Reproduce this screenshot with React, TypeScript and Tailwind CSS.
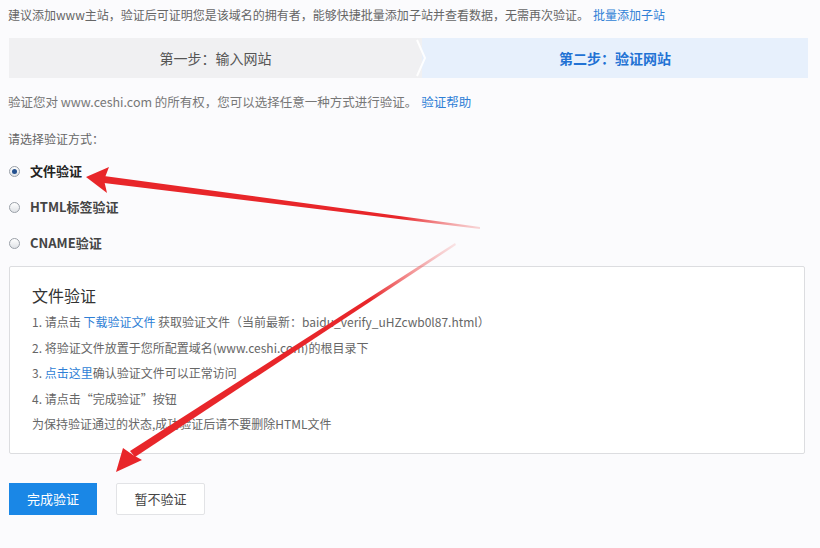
import React from 'react';

const font = { fontFamily: '"Noto Sans CJK SC", "Liberation Sans", sans-serif' };

function Radio({ checked }: { checked?: boolean }) {
  return (
    <span className="flex h-[11px] w-[11px] items-center justify-center rounded-full border border-[#9aa0a8] bg-gradient-to-b from-white to-[#dfe2e6]">
      {checked && <span className="h-[5px] w-[5px] rounded-full bg-[#24518f]" />}
    </span>
  );
}

function Arrows() {
  return (
    <svg className="pointer-events-none absolute left-0 top-0" width="820" height="548" viewBox="0 0 820 548">
      <defs>
        <linearGradient id="fade1" x1="88" y1="178" x2="480" y2="229" gradientUnits="userSpaceOnUse">
          <stop offset="0" stopColor="#e8262a" />
          <stop offset="0.8" stopColor="#e8262a" />
          <stop offset="1" stopColor="#f08080" stopOpacity="0.3" />
        </linearGradient>
        <linearGradient id="fade2" x1="118" y1="470" x2="455" y2="244" gradientUnits="userSpaceOnUse">
          <stop offset="0" stopColor="#e8262a" />
          <stop offset="0.75" stopColor="#e8262a" />
          <stop offset="1" stopColor="#f08080" stopOpacity="0.2" />
        </linearGradient>
      </defs>
      {/* arrow to 文件验证 */}
      <polygon points="104,176 480,227 480,229 104,183" fill="url(#fade1)" />
      <polygon points="86,177 109,167 104,180 107,193" fill="#e8262a" />
      {/* arrow to 完成验证 */}
      <polygon points="130,451 455,243 456,245 135,457" fill="url(#fade2)" />
      <polygon points="116,472 123,448 133,455 142,460" fill="#e8262a" />
    </svg>
  );
}

export default function App() {
  return (
    <div className="relative h-[548px] w-[820px] overflow-hidden bg-[#fbfbfd] text-[#555]" style={font}>
      <p className="px-2 pt-[6px] text-[12px] leading-[18px] text-[#666]">
        建议添加www主站，验证后可证明您是该域名的拥有者，能够快捷批量添加子站并查看数据，无需再次验证。
        <span className="ml-1 text-[#2f7fd6]">批量添加子站</span>
      </p>

      {/* Steps */}
      <div className="mx-[9px] mt-[14px] flex h-[40px] w-[799px]">
        <div className="relative flex w-[413px] items-center justify-center bg-[#f0f0f2] text-[14px] text-[#555]">
          第一步：输入网站
          <svg className="absolute -right-[8px] top-0 z-10" width="16" height="40" viewBox="0 0 16 40">
            <path d="M3 2 L11 20 L3 38" fill="none" stroke="#ffffff" strokeWidth="2" strokeOpacity="0.9" />
          </svg>
        </div>
        <div className="flex flex-1 items-center justify-center bg-[#e7f0fc] text-[14px] font-bold text-[#2272d4]">
          第二步：验证网站
        </div>
      </div>

      <p className="mt-[15px] px-2 text-[12.5px] leading-[18px] text-[#777]">
        验证您对 www.ceshi.com 的所有权，您可以选择任意一种方式进行验证。
        <span className="ml-1 text-[#2f7fd6]">验证帮助</span>
      </p>

      <p className="mt-[19px] px-2 text-[12px] leading-[18px] text-[#666]">请选择验证方式：</p>

      <div className="mt-[14px] flex flex-col gap-[18px] pl-[9px]">
        <label className="flex h-[18px] items-center gap-[10px] text-[13px] font-bold text-[#222]">
          <Radio checked />
          文件验证
        </label>
        <label className="flex h-[18px] items-center gap-[10px] text-[13px] font-bold text-[#444]">
          <Radio />
          HTML标签验证
        </label>
        <label className="flex h-[18px] items-center gap-[10px] text-[13px] font-bold text-[#444]">
          <Radio />
          CNAME验证
        </label>
      </div>

      {/* File verification box */}
      <div className="ml-[9px] mt-[14px] h-[188px] w-[796px] rounded-[2px] border border-[#dcdde0] bg-white px-[22px] pt-[17px]">
        <h3 className="text-[16px] leading-[22px] text-[#333]">文件验证</h3>
        <ol className="mt-[3px] flex flex-col text-[12px] leading-[25.5px] text-[#666]">
          <li>
            1. 请点击 <span className="text-[#2f7fd6]">下载验证文件</span> 获取验证文件（当前最新：baidu_verify_uHZcwb0l87.html）
          </li>
          <li>2. 将验证文件放置于您所配置域名(www.ceshi.com)的根目录下</li>
          <li>
            3. <span className="text-[#2f7fd6]">点击这里</span>确认验证文件可以正常访问
          </li>
          <li>4. 请点击“完成验证”按钮</li>
          <li>为保持验证通过的状态,成功验证后请不要删除HTML文件</li>
        </ol>
      </div>

      <div className="ml-[9px] mt-[29px] flex gap-[19px]">
        <button className="h-[32px] w-[88px] bg-[#1a87e6] text-[13px] text-white">完成验证</button>
        <button className="h-[32px] w-[89px] rounded-[2px] border border-[#e2e3e6] bg-white text-[13px] text-[#444]">
          暂不验证
        </button>
      </div>

      <Arrows />
    </div>
  );
}
